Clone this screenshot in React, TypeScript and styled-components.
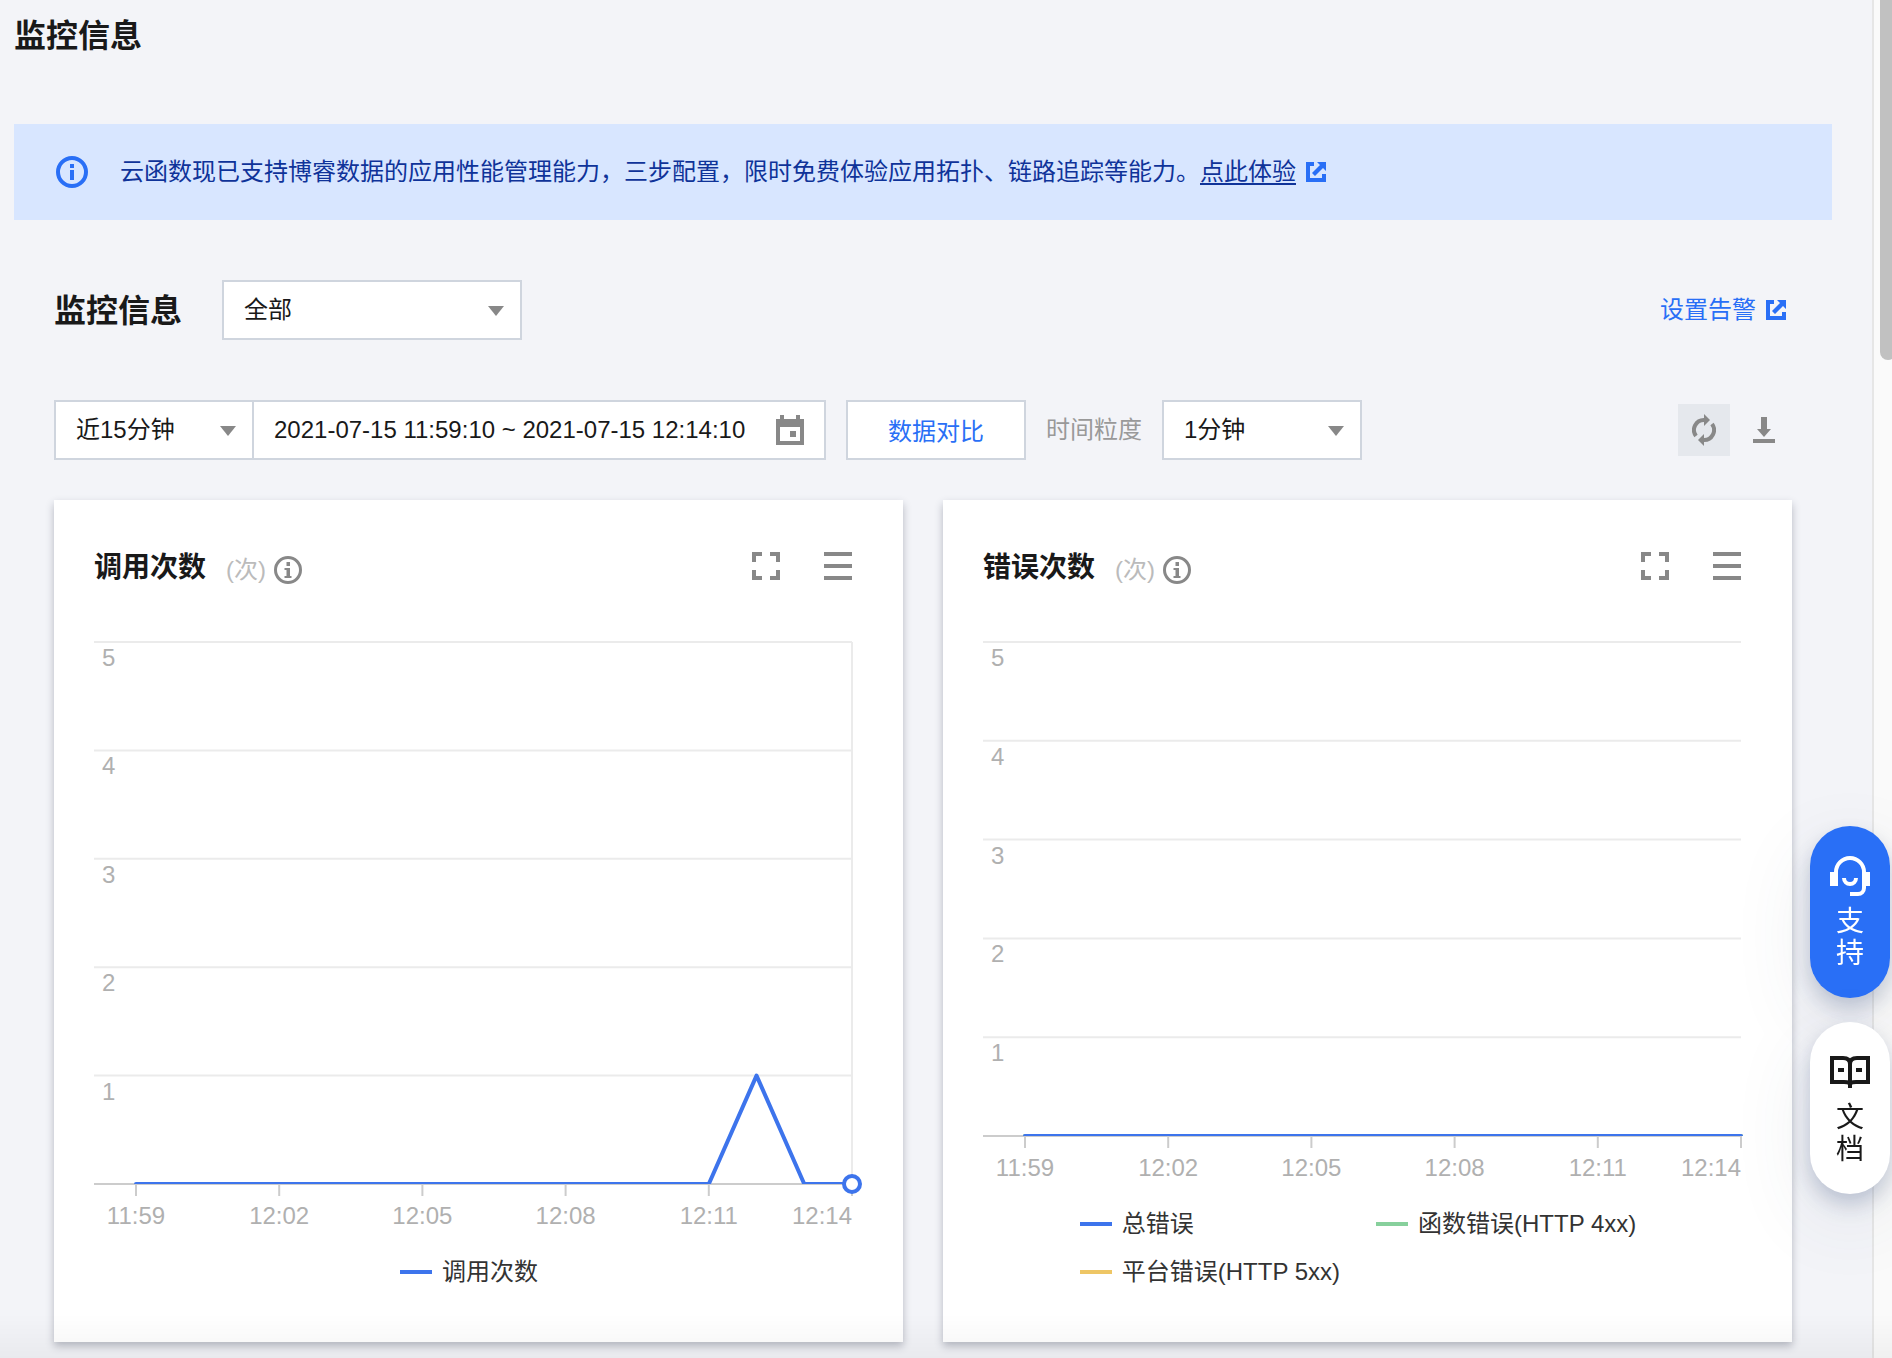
import React, { useId, useLayoutEffect, useRef, useState } from "react";
import styled, { createGlobalStyle } from "styled-components";

const color = {
  page: "#f3f4f8",
  text: "#191919",
  muted: "#888",
  faint: "#bbb",
  axis: "#b0b0b0",
  border: "#cfd5de",
  blue: "#296ff6",
};

const fontStack = `"Liberation Sans", "Noto Sans CJK SC", sans-serif`;

const GlobalStyle = createGlobalStyle`
  *, *::before, *::after { box-sizing: border-box; }
  body {
    margin: 0;
    background: ${color.page};
    color: ${color.text};
    font: 24px/36px ${fontStack};
  }
  h1, h2, h3, p, ul { margin: 0; padding: 0; }
  button, input, select { font: inherit; color: inherit; }
`;

/* ---------- page frame ---------- */

const Shell = styled.div`
  display: flex;
  height: 100vh;
  overflow: hidden;
`;

const Main = styled.main`
  flex: 1;
  min-width: 0;
  padding: 12px 40px 0 14px;
`;

const ScrollRail = styled.div`
  width: 20px;
  flex: none;
  padding-left: 6px;
  overflow: hidden;
  border-left: 2px solid #e6e6e6;
  background: #fafafa;
`;

const ScrollThumb = styled.div`
  width: 16px;
  height: 360px;
  border-radius: 0 0 8px 8px;
  background: #c1c1c1;
`;

const BottomFade = styled.div`
  position: fixed;
  inset: auto 0 0 0;
  height: 44px;
  pointer-events: none;
  background: linear-gradient(rgba(0, 0, 0, 0), rgba(0, 0, 0, 0.04));
`;

const PageTitle = styled.h1`
  margin-bottom: 66px;
  padding-top: 2px;
  font-size: 32px;
  line-height: 44px;
  font-weight: 700;
`;

const Banner = styled.div`
  display: flex;
  align-items: center;
  gap: 32px;
  height: 96px;
  padding: 0 42px;
  background: #d8e6ff;
  color: #0f3399;

  svg {
    flex: none;
    color: ${color.blue};
  }
`;

const BannerText = styled.p`
  display: flex;
  align-items: center;
`;

const BannerLink = styled.a`
  display: inline-flex;
  align-items: center;
  gap: 10px;
  color: inherit;
  text-decoration: underline;
  text-decoration-thickness: 2px;
  text-underline-offset: 3px;
`;

const Section = styled.section`
  display: flex;
  flex-direction: column;
  padding: 60px 40px 0;
`;

const HeadRow = styled.div`
  display: flex;
  align-items: center;
  gap: 40px;
  margin-bottom: 60px;
`;

const SectionTitle = styled.h2`
  padding-top: 2px;
  font-size: 32px;
  line-height: 44px;
  font-weight: 700;
`;

const AlarmLink = styled.a`
  display: inline-flex;
  align-items: center;
  gap: 10px;
  margin-left: auto;
  padding-right: 6px;
  color: ${color.blue};
  text-decoration: none;
`;

/* ---------- controls ---------- */

const Toolbar = styled.div`
  display: flex;
  align-items: center;
  gap: 20px;
  margin-bottom: 40px;
`;

const SelectBox = styled.div<{ $width: number }>`
  position: relative;
  width: ${(p) => p.$width}px;

  &::after {
    content: "";
    position: absolute;
    right: 18px;
    top: 26px;
    border: 8px solid transparent;
    border-top: 10px solid ${color.muted};
    border-bottom: 0;
    pointer-events: none;
  }
`;

const SelectInput = styled.select`
  display: block;
  width: 100%;
  height: 60px;
  padding: 0 40px 0 20px;
  appearance: none;
  border: 2px solid ${color.border};
  border-radius: 0;
  background: #fff;
`;

const RangeGroup = styled.div`
  display: flex;
`;

const DateField = styled.label`
  display: flex;
  align-items: center;
  width: 574px;
  height: 60px;
  margin-left: -2px;
  padding: 0 20px;
  border: 2px solid ${color.border};
  background: #fff;
  color: ${color.muted};
`;

const DateInput = styled.input`
  flex: 1;
  min-width: 0;
  padding: 0;
  border: 0;
  outline: 0;
  background: none;
  color: ${color.text};
`;

const CompareButton = styled.button`
  width: 180px;
  height: 60px;
  padding: 4px 0 0;
  border: 2px solid ${color.border};
  background: #fff;
  color: ${color.blue};
`;

const FieldLabel = styled.label`
  color: #999;
`;

const ToolActions = styled.div`
  display: flex;
  gap: 8px;
  margin-left: auto;
  padding-right: 2px;
`;

const ToolButton = styled.button<{ $active?: boolean }>`
  display: grid;
  place-items: center;
  width: 52px;
  height: 52px;
  padding: 0;
  border: 0;
  background: ${(p) => (p.$active ? "#e5e8ed" : "transparent")};
  color: ${color.muted};
`;

/* ---------- cards ---------- */

const CardGrid = styled.div`
  display: grid;
  grid-template-columns: 1fr 1fr;
  gap: 40px;
`;

const Card = styled.article`
  min-width: 0;
  padding: 40px 51px 46px 40px;
  background: #fff;
  box-shadow: 0 4px 8px rgba(54, 58, 80, 0.32);
`;

const CardHead = styled.header`
  display: flex;
  align-items: center;
  height: 52px;
  margin-bottom: 40px;
`;

const CardTitle = styled.h3`
  padding-top: 4px;
  font-size: 28px;
  line-height: 40px;
  font-weight: 700;
`;

const Unit = styled.span`
  display: inline-flex;
  align-items: center;
  gap: 8px;
  margin-left: 20px;
  padding-top: 8px;
  color: ${color.faint};

  svg {
    color: ${color.muted};
  }
`;

const CardActions = styled.div`
  display: flex;
  gap: 44px;
  margin-left: auto;
`;

const IconButton = styled.button`
  display: block;
  padding: 0;
  border: 0;
  background: none;
  color: ${color.muted};
  line-height: 0;
`;

const ChartBox = styled.div<{ $height: number }>`
  height: ${(p) => p.$height}px;

  svg {
    display: block;
    overflow: visible;
  }
  text {
    font: 24px ${fontStack};
    fill: ${color.axis};
  }
`;

const Legend = styled.ul<{ $columns: number }>`
  display: grid;
  grid-template-columns: repeat(${(p) => p.$columns}, max-content);
  justify-content: center;
  column-gap: 28px;
  list-style: none;
`;

const LegendItem = styled.li<{ $color: string }>`
  display: flex;
  align-items: center;
  gap: 10px;
  padding-right: 8px;
  line-height: 48px;
  color: #333;

  &::before {
    content: "";
    width: 32px;
    height: 4px;
    background: ${(p) => p.$color};
  }
`;

/* ---------- floating help ---------- */

const Dock = styled.aside`
  position: fixed;
  right: 2px;
  top: 826px;
  display: flex;
  flex-direction: column;
  gap: 24px;
`;

const DockButton = styled.button<{ $primary?: boolean }>`
  display: flex;
  flex-direction: column;
  align-items: center;
  width: 80px;
  height: 172px;
  padding: 30px 0 0;
  border: 0;
  border-radius: 40px;
  background: ${(p) => (p.$primary ? color.blue : "#fff")};
  color: ${(p) => (p.$primary ? "#fff" : color.text)};
  box-shadow: 0 10px 20px rgba(55, 75, 120, 0.26), 0 24px 80px rgba(55, 75, 100, 0.1);
`;

const DockLabel = styled.span`
  width: 28px;
  margin-top: 10px;
  font-size: 28px;
  line-height: 32px;
`;

const DockIcon = styled.span`
  display: grid;
  place-items: center;
  width: 40px;
  height: 40px;
`;

/* ---------- icons ---------- */

const InfoFilledIcon = () => (
  <svg width="32" height="32" viewBox="0 0 32 32" aria-hidden="true">
    <circle cx="16" cy="16" r="14" fill="none" stroke="currentColor" strokeWidth="4" />
    <path d="M14 8h4v4h-4zM14 14h4v10h-4z" fill="currentColor" />
  </svg>
);

const InfoIcon = () => (
  <svg width="28" height="28" viewBox="0 0 28 28" aria-hidden="true">
    <circle cx="14" cy="14" r="12.5" fill="none" stroke="currentColor" strokeWidth="3" />
    <path d="M12.5 6H16v4h-3.500zM10.500 12H16v8h1.500v2h-7v-2h2v-6h-2z" fill="currentColor" />
  </svg>
);

const ExternalIcon = () => (
  <svg width="20" height="20" viewBox="0 0 20 20" fill="currentColor" aria-hidden="true">
    <path d="M0 0h8v4H4v12h12v-4h4v8H0z" />
    <path d="M11 0h9v9l-3-3-8 8-3-3 8-8z" />
  </svg>
);

const CalendarIcon = () => (
  <svg width="28" height="30" viewBox="0 0 28 30" aria-hidden="true">
    <path
      fill="currentColor"
      fillRule="evenodd"
      d="M4 0h4v4h12V0h4v4h4v26H0V4h4zM4 12v14h20V12zM14 16h6v6h-6z"
    />
  </svg>
);

const RefreshIcon = () => (
  <svg width="24" height="32" viewBox="-12 -16 24 32" aria-hidden="true">
    {[0, 180].map((turn) => (
      <g key={turn} transform={`rotate(${turn})`}>
        <path d="M-8 6A10 10 0 0 1 0.500 -10" fill="none" stroke="currentColor" strokeWidth="4" />
        <path d="M0 -16L6 -10L0 -4z" fill="currentColor" />
      </g>
    ))}
  </svg>
);

const DownloadIcon = () => (
  <svg width="22" height="26" viewBox="0 0 22 26" fill="currentColor" aria-hidden="true">
    <path d="M8 0h6v12h4l-7 8-7-8h4zM0 22h22v4H0z" />
  </svg>
);

const FullscreenIcon = () => (
  <svg width="28" height="28" viewBox="0 0 28 28" fill="currentColor" aria-hidden="true">
    <path d="M0 0h10v4H4v6H0zM18 0h10v10h-4V4h-6zM0 18h4v6h6v4H0zM24 18h4v10H18v-4h6z" />
  </svg>
);

const MenuIcon = () => (
  <svg width="28" height="28" viewBox="0 0 28 28" fill="currentColor" aria-hidden="true">
    <path d="M0 0h28v4H0zM0 12h28v4H0zM0 24h28v4H0z" />
  </svg>
);

const HeadsetIcon = () => (
  <svg width="40" height="40" viewBox="0 0 40 40" aria-hidden="true">
    <path d="M0 16h8v14H0zM32 16h8v14h-8z" fill="currentColor" />
    <path
      d="M6 18v-2a14 14 0 0 1 28 0v16a6 6 0 0 1-6 6h-8M14 22a6 6 0 0 0 12 0"
      fill="none"
      stroke="currentColor"
      strokeWidth="4"
    />
  </svg>
);

const BookIcon = () => (
  <svg width="40" height="32" viewBox="0 0 40 32" aria-hidden="true">
    <path
      d="M2 2h11q7 0 7 6q0-6 7-6h11v24H26q-6 0-6 3q0-3-6-3H2zM20 6v26"
      fill="none"
      stroke="currentColor"
      strokeWidth="4"
    />
    <path d="M8 12h6v4H8zM26 12h6v4h-6z" fill="currentColor" />
  </svg>
);

/* ---------- chart ---------- */

type Series = { name: string; color: string; values: number[] };
type ChartProps = { label: string; height: number; series: Series[]; active?: boolean };

const MINUTES = ["11:59", "12:02", "12:05", "12:08", "12:11", "12:14"];
const STEPS = 15;
const MAX = 5;
const PLOT_TOP = 10;
const AXIS_SPACE = 64;
const FIRST_X = 42;

function LineChart({ label, height, series, active }: ChartProps) {
  const box = useRef<HTMLDivElement>(null);
  const [width, setWidth] = useState(758);
  const clipId = useId();

  useLayoutEffect(() => {
    const node = box.current;
    if (!node) return;
    const measure = () => setWidth(node.clientWidth);
    measure();
    const observer = new ResizeObserver(measure);
    observer.observe(node);
    return () => observer.disconnect();
  }, []);

  const bottom = height - AXIS_SPACE;
  const x = (i: number) => FIRST_X + ((width - FIRST_X) * i) / STEPS;
  const y = (v: number) => bottom - ((bottom - PLOT_TOP) * v) / MAX;

  return (
    <ChartBox ref={box} $height={height}>
      <svg width={width} height={height} role="img" aria-label={label}>
        <clipPath id={clipId}>
          <rect x="0" y="0" width={width + 2} height={bottom} />
        </clipPath>
        {[5, 4, 3, 2, 1].map((v) => (
          <g key={v}>
            <line x1="0" x2={width} y1={y(v)} y2={y(v)} stroke="#ebebeb" strokeWidth="2" />
            <text x="8" y={y(v) + 24}>
              {v}
            </text>
          </g>
        ))}
        {active && <line x1={width} x2={width} y1={PLOT_TOP} y2={bottom} stroke="#ebebeb" strokeWidth="2" />}
        <line x1="0" x2={width} y1={bottom} y2={bottom} stroke="#ccc" strokeWidth="2" />
        {MINUTES.map((m, i) => (
          <g key={m}>
            <line x1={x(i * 3)} x2={x(i * 3)} y1={bottom} y2={bottom + 12} stroke="#ccc" strokeWidth="2" />
            <text x={x(i * 3)} y={bottom + 40} textAnchor={i === MINUTES.length - 1 ? "end" : "middle"}>
              {m}
            </text>
          </g>
        ))}
        {[...series].reverse().map((s) => (
          <polyline
            key={s.name}
            clipPath={`url(#${clipId})`}
            points={s.values.map((v, i) => `${x(i)},${y(v)}`).join(" ")}
            fill="none"
            stroke={s.color}
            strokeWidth="4"
            strokeLinecap="round"
            strokeLinejoin="round"
          />
        ))}
        {active && (
          <circle cx={width} cy={bottom} r="8" fill="#fff" stroke={series[0].color} strokeWidth="4" />
        )}
      </svg>
    </ChartBox>
  );
}

const zeros = () => Array.from({ length: STEPS + 1 }, () => 0);
const calls = zeros();
calls[13] = 1;

const charts = [
  {
    title: "调用次数",
    height: 616,
    columns: 1,
    active: true,
    series: [{ name: "调用次数", color: "#3d74ec", values: calls }],
  },
  {
    title: "错误次数",
    height: 568,
    columns: 2,
    active: false,
    series: [
      { name: "总错误", color: "#3d74ec", values: zeros() },
      { name: "函数错误(HTTP 4xx)", color: "#87d09c", values: zeros() },
      { name: "平台错误(HTTP 5xx)", color: "#eec665", values: zeros() },
    ],
  },
];

export default function App() {
  return (
    <>
      <GlobalStyle />
      <Shell>
        <Main>
          <PageTitle>监控信息</PageTitle>
          <Banner role="status">
            <InfoFilledIcon />
            <BannerText>
              云函数现已支持博睿数据的应用性能管理能力，三步配置，限时免费体验应用拓扑、链路追踪等能力。
              <BannerLink href="#apm">
                点此体验
                <ExternalIcon />
              </BannerLink>
            </BannerText>
          </Banner>

          <Section>
            <HeadRow>
              <SectionTitle>监控信息</SectionTitle>
              <SelectBox $width={300}>
                <SelectInput aria-label="监控范围" defaultValue="全部">
                  <option>全部</option>
                </SelectInput>
              </SelectBox>
              <AlarmLink href="#alarm">
                设置告警
                <ExternalIcon />
              </AlarmLink>
            </HeadRow>

            <Toolbar>
              <RangeGroup>
                <SelectBox $width={200}>
                  <SelectInput aria-label="时间范围" defaultValue="近15分钟">
                    <option>近15分钟</option>
                  </SelectInput>
                </SelectBox>
                <DateField>
                  <DateInput
                    aria-label="起止时间"
                    readOnly
                    value="2021-07-15 11:59:10 ~ 2021-07-15 12:14:10"
                  />
                  <CalendarIcon />
                </DateField>
              </RangeGroup>
              <CompareButton type="button">数据对比</CompareButton>
              <FieldLabel htmlFor="granularity">时间粒度</FieldLabel>
              <SelectBox $width={200}>
                <SelectInput id="granularity" defaultValue="1分钟">
                  <option>1分钟</option>
                </SelectInput>
              </SelectBox>
              <ToolActions>
                <ToolButton type="button" $active aria-label="刷新">
                  <RefreshIcon />
                </ToolButton>
                <ToolButton type="button" aria-label="下载">
                  <DownloadIcon />
                </ToolButton>
              </ToolActions>
            </Toolbar>

            <CardGrid>
              {charts.map((c) => (
                <Card key={c.title}>
                  <CardHead>
                    <CardTitle>{c.title}</CardTitle>
                    <Unit>
                      (次)
                      <InfoIcon />
                    </Unit>
                    <CardActions>
                      <IconButton type="button" aria-label="全屏">
                        <FullscreenIcon />
                      </IconButton>
                      <IconButton type="button" aria-label="菜单">
                        <MenuIcon />
                      </IconButton>
                    </CardActions>
                  </CardHead>
                  <LineChart label={c.title} height={c.height} series={c.series} active={c.active} />
                  <Legend $columns={c.columns}>
                    {c.series.map((s) => (
                      <LegendItem key={s.name} $color={s.color}>
                        {s.name}
                      </LegendItem>
                    ))}
                  </Legend>
                </Card>
              ))}
            </CardGrid>
          </Section>
        </Main>
        <ScrollRail>
          <ScrollThumb />
        </ScrollRail>
      </Shell>
      <BottomFade />
      <Dock>
        <DockButton type="button" $primary>
          <DockIcon>
            <HeadsetIcon />
          </DockIcon>
          <DockLabel>支持</DockLabel>
        </DockButton>
        <DockButton type="button">
          <DockIcon>
            <BookIcon />
          </DockIcon>
          <DockLabel>文档</DockLabel>
        </DockButton>
      </Dock>
    </>
  );
}
